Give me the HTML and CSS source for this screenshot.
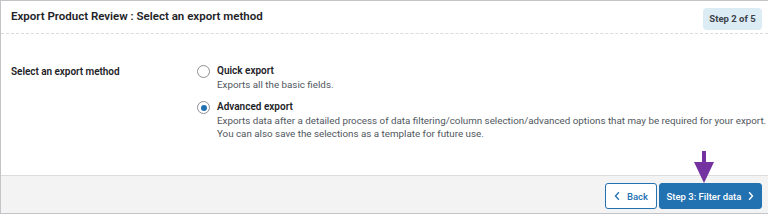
FILE: index.html
```html
<!DOCTYPE html>
<html lang="en">
<head>
<meta charset="utf-8">
<title>Export Product Review</title>
<link rel="stylesheet" href="styles.css">
</head>
<body>
<div class="card">
  <div class="card-head">
    <h2 class="title">Export Product Review : Select an export method</h2>
    <span class="badge">Step 2 of 5</span>
  </div>
  <div class="card-body">
    <div class="field-label">Select an export method</div>
    <div class="options">
      <label class="option">
        <span class="radio"></span>
        <span class="option-text">
          <span class="option-name">Quick export</span>
          <span class="option-desc">Exports all the basic fields.</span>
        </span>
      </label>
      <label class="option">
        <span class="radio checked"></span>
        <span class="option-text">
          <span class="option-name">Advanced export</span>
          <span class="option-desc">Exports data after a detailed process of data filtering/column selection/advanced options that may be required for your export.<br>You can also save the selections as a template for future use.</span>
        </span>
      </label>
    </div>
  </div>
  <div class="card-foot">
    <button class="btn btn-secondary"><svg class="chev" viewBox="0 0 8 12" width="6" height="10"><path d="M6.5 1 L2 6 L6.5 11" fill="none" stroke="currentColor" stroke-width="1.8"/></svg>Back</button>
    <button class="btn btn-primary">Step 3: Filter data<svg class="chev chev-r" viewBox="0 0 8 12" width="6" height="10"><path d="M1.5 1 L6 6 L1.5 11" fill="none" stroke="currentColor" stroke-width="1.8"/></svg></button>
    <svg class="pointer" viewBox="0 0 22 33" width="22" height="33"><rect x="9" y="0" width="4" height="14" fill="#7432a0"/><path d="M1 11 L21 11 L11 32 Z" fill="#7432a0"/></svg>
  </div>
</div>
</body>
</html>
```

FILE: styles.css
```css
* { box-sizing: border-box; }
html, body { margin: 0; padding: 0; background: #fff; }
body {
  font-family: Roboto, "Noto Sans", sans-serif;
  color: #1d2327;
  width: 768px;
  height: 214px;
  overflow: hidden;
}
.card {
  border: 1px solid #c3c4c7;
  border-right: none;
  width: 768px;
  height: 214px;
  display: flex;
  flex-direction: column;
}
.card-head {
  height: 33px;
  display: flex;
  align-items: center;
  justify-content: space-between;
  padding: 0 6px 0 10px;
  border-bottom: 1px dashed #dcdcde;
}
.title {
  margin: 0;
  font-size: 11.5px;
  font-weight: 600;
  line-height: 14px;
  margin-top: -2px;
}
.badge {
  background: #dcecf5;
  color: #3c434a;
  font-size: 9.5px;
  font-weight: 700;
  width: 59px;
  text-align: center;
  height: 22px;
  line-height: 22px;
  border-radius: 4px;
  margin-top: 3px;
  white-space: nowrap;
}
.card-body {
  flex: 1;
  display: grid;
  grid-template-columns: 186px 1fr;
  align-content: start;
  padding: 30px 0 0 10px;
}
.field-label {
  font-size: 10px;
  font-weight: 600;
  letter-spacing: -0.05px;
  line-height: 14px;
  padding-top: 1px;
}
.options {
  display: flex;
  flex-direction: column;
  gap: 9px;
}
.option {
  display: flex;
  align-items: flex-start;
  gap: 7px;
}
.radio {
  width: 13px;
  height: 13px;
  border: 1px solid #8c8f94;
  border-radius: 50%;
  margin-top: 1px;
  display: flex;
  align-items: center;
  justify-content: center;
  flex-shrink: 0;
  background: #fff;
}
.radio.checked::after {
  content: "";
  width: 6px;
  height: 6px;
  border-radius: 50%;
  background: #2271b1;
}
.option-text { display: flex; flex-direction: column; }
.option-name {
  font-size: 10px;
  font-weight: 600;
  line-height: 14px;
}
.option-desc {
  font-size: 9.8px;
  line-height: 13px;
  color: #50575e;
  white-space: nowrap;
}
.card-foot {
  position: relative;
  height: 38px;
  background: #f3f3f3;
  border-top: 1px solid #dcdcde;
  display: flex;
  justify-content: flex-end;
  align-items: flex-start;
  gap: 2px;
  padding: 7px 6px 0 0;
}
.btn {
  height: 26px;
  border-radius: 3px;
  font-family: inherit;
  font-size: 9.5px;
  font-weight: 500;
  display: flex;
  align-items: center;
  justify-content: center;
  gap: 7px;
  white-space: nowrap;
  cursor: pointer;
  padding: 0;
}
.btn-secondary {
  background: #fff;
  color: #2271b1;
  border: 1px solid #2271b1;
  width: 52px;
}
.btn-primary {
  background: #2271b1;
  color: #fff;
  border: 1px solid #2271b1;
  width: 103px;
}
.pointer {
  position: absolute;
  right: 53px;
  top: -25px;
}
```
